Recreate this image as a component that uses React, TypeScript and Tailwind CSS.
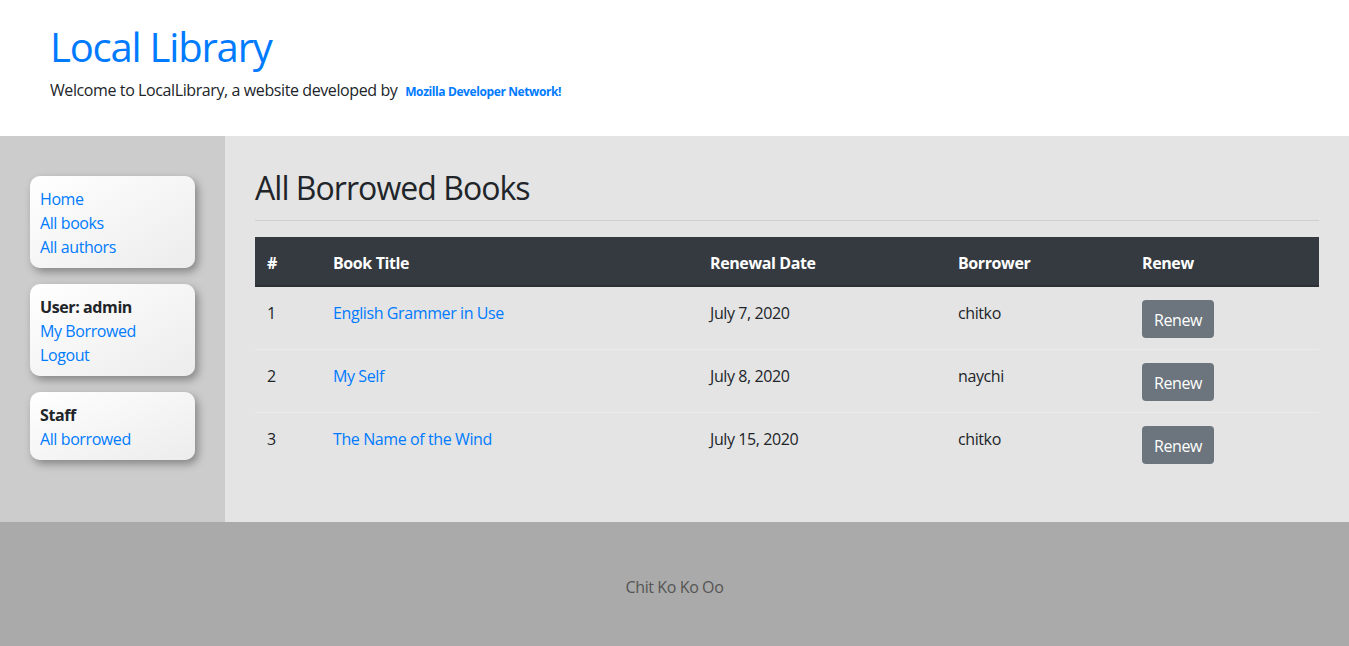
import React from 'react';

type Loan = {
  id: number;
  title: string;
  due: string;
  borrower: string;
};

const loans: Loan[] = [
  { id: 1, title: 'English Grammer in Use', due: 'July 7, 2020', borrower: 'chitko' },
  { id: 2, title: 'My Self', due: 'July 8, 2020', borrower: 'naychi' },
  { id: 3, title: 'The Name of the Wind', due: 'July 15, 2020', borrower: 'chitko' },
];

const cardClass =
  'rounded-[10px] bg-gradient-to-br from-white to-[#ececec] px-[10px] pt-[11px] pb-[9px] shadow-[3px_4px_8px_rgba(0,0,0,0.35)] leading-6';

const App = () => {
  return (
    <div className="min-h-screen bg-white text-[16px] tracking-[-0.025em] text-[#212529] font-['Open_Sans',sans-serif]">
      {/* Header */}
      <header className="h-[136px] px-[50px] pt-[23px]">
        <h1 className="text-[40px] leading-[48px] font-normal tracking-[-0.03em] text-[#007bff]">Local Library</h1>
        <p className="mt-[7px] leading-6">
          Welcome to LocalLibrary, a website developed by{' '}
          <a href="#" className="ml-[4px] text-[12px] font-bold text-[#007bff]">
            Mozilla Developer Network!
          </a>
        </p>
      </header>

      <div className="flex">
        {/* Sidebar */}
        <aside className="w-[225px] shrink-0 bg-[#cccccc] pl-[30px] pt-[40px]">
          <div className="flex w-[165px] flex-col gap-4">
            <div className={cardClass}>
              <a href="#" className="block text-[#007bff]">Home</a>
              <a href="#" className="block text-[#007bff]">All books</a>
              <a href="#" className="block text-[#007bff]">All authors</a>
            </div>
            <div className={cardClass}>
              <div className="font-bold">User: admin</div>
              <a href="#" className="block text-[#007bff]">My Borrowed</a>
              <a href="#" className="block text-[#007bff]">Logout</a>
            </div>
            <div className={cardClass}>
              <div className="font-bold">Staff</div>
              <a href="#" className="block text-[#007bff]">All borrowed</a>
            </div>
          </div>
        </aside>

        {/* Main content */}
        <main className="flex-1 bg-[#e4e4e4] px-[30px] pt-[33px] pb-[47px]">
          <h2 className="text-[32px] leading-[38px] font-normal tracking-[-0.03em]">All Borrowed Books</h2>
          <hr className="mt-[13px] mb-[16px] border-t border-[#cfcfcf]" />
          <table className="w-full border-collapse text-left">
            <thead className="bg-[#343a40] text-white">
              <tr>
                <th className="w-[66px] border-b-2 border-[#2b3035] px-3 pt-[14px] pb-[10px] font-bold">#</th>
                <th className="w-[377px] border-b-2 border-[#2b3035] px-3 pt-[14px] pb-[10px] font-bold">Book Title</th>
                <th className="w-[248px] border-b-2 border-[#2b3035] px-3 pt-[14px] pb-[10px] font-bold">Renewal Date</th>
                <th className="w-[184px] border-b-2 border-[#2b3035] px-3 pt-[14px] pb-[10px] font-bold">Borrower</th>
                <th className="border-b-2 border-[#2b3035] px-3 pt-[14px] pb-[10px] font-bold">Renew</th>
              </tr>
            </thead>
            <tbody>
              {loans.map((loan, index) => (
                <tr key={loan.id} className={index > 0 ? 'border-t border-[#ebebeb]' : ''}>
                  <td className="px-3 pt-[14px] pb-[10px] align-top">{loan.id}</td>
                  <td className="px-3 pt-[14px] pb-[10px] align-top">
                    <a href="#" className="text-[#007bff]">{loan.title}</a>
                  </td>
                  <td className="px-3 pt-[14px] pb-[10px] align-top">{loan.due}</td>
                  <td className="px-3 pt-[14px] pb-[10px] align-top">{loan.borrower}</td>
                  <td className="px-3 pt-[13px] pb-[11px] align-top">
                    <button className="h-[38px] rounded-[4px] bg-[#6c757d] px-3 pt-[2px] text-white">Renew</button>
                  </td>
                </tr>
              ))}
            </tbody>
          </table>
        </main>
      </div>

      {/* Footer */}
      <footer className="flex h-[124px] items-center justify-center bg-[#aaaaaa] pt-[6px] text-[#555555]">
        Chit Ko Ko Oo
      </footer>
    </div>
  );
};

export default App;
